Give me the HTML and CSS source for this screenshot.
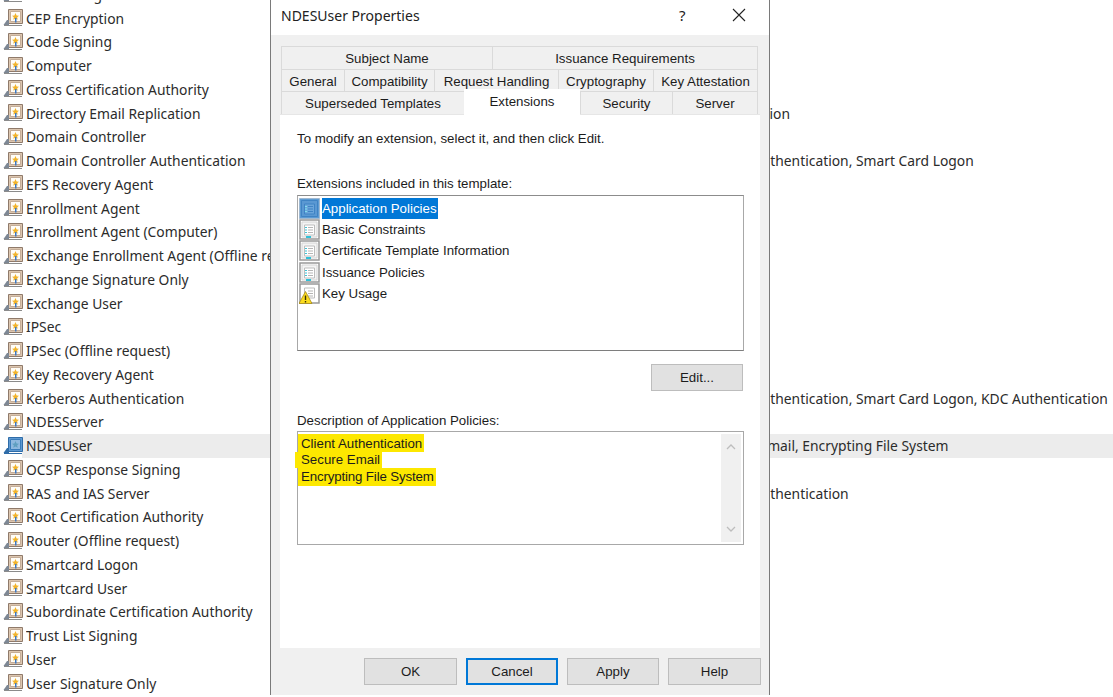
FILE: index.html
```html
<!DOCTYPE html>
<html lang="en">
<head>
<meta charset="utf-8">
<title>NDESUser Properties</title>
<link rel="stylesheet" href="styles.css">
</head>
<body>
<svg class="defs" width="0" height="0" aria-hidden="true">
  <symbol id="tpl" viewBox="0 0 20 20">
    <path d="M5.500 2.500h14v14h-14z" fill="#dcc6b0" stroke="#8f7a6a"/>
    <path d="M7.500 4.500h10v10h-10z" fill="#fffdf8" stroke="#c4ad98"/>
    <path d="M12.500 6l1.100 2.400 2.400.3-1.800 1.600.5 2.400-2.200-1.200-2.200 1.200.5-2.400L9 8.700l2.400-.3z" fill="#f2b42c"/>
    <path d="M12 11h1.500v4.500H12z" fill="#3b78c4"/>
    <path d="M.5 18l3.500-5h2v5z" fill="#7d8794"/>
    <path d="M1 18.500h18" stroke="#8b8b8b"/>
  </symbol>
  <symbol id="tplsel" viewBox="0 0 20 20">
    <path d="M5.500 2.500h14v14h-14z" fill="#5f9ad2" stroke="#2f6ca8"/>
    <path d="M7.500 4.500h10v10h-10z" fill="#8fb9df" stroke="#3a7cba"/>
    <path d="M12.500 6l1.100 2.400 2.400.3-1.800 1.600.5 2.400-2.200-1.200-2.200 1.200.5-2.400L9 8.700l2.400-.3z" fill="#5f9fc0"/>
    <path d="M.5 18l3.500-5h2v5z" fill="#2f6ca8"/>
    <path d="M1 18.500h18" stroke="#2f6ca8"/>
  </symbol>
  <symbol id="ext" viewBox="0 0 21 21">
    <path d="M1 1h19v19H1z" fill="#fff" stroke="#999" stroke-width="1.500"/>
    <path d="M3 3h15v15H3z" fill="#f4f4f4" stroke="#d4d4d4"/>
    <path d="M5.500 6h10v10h-10z" fill="#fff" stroke="#bdbdbd"/>
    <path d="M6 8.500h2M6 11h2M6 13.500h2" stroke="#3fc3d6"/>
    <path d="M9 8.500h5M9 11h5M9 13.500h5" stroke="#b5b5b5"/>
    <path d="M7 18h5" stroke="#2fc0d8" stroke-width="2"/>
  </symbol>
  <symbol id="extsel" viewBox="0 0 21 21">
    <path d="M.5.500h20v20H.5z" fill="#5c9bd3" stroke="#9fb9d2"/>
    <path d="M2.500 2.500h16v16h-16z" fill="#5a98d2" stroke="#3f83c4"/>
    <path d="M5.500 6h10v10h-10z" fill="#6ba5da" stroke="#3f83c4"/>
    <path d="M6 8.500h2M6 11h2M6 13.500h2" stroke="#7fe0ee"/>
    <path d="M9 8.500h5M9 11h5M9 13.500h5" stroke="#3f83c4"/>
  </symbol>
  <symbol id="warn" viewBox="0 0 21 21">
    <path d="M1 1h19v19H1z" fill="#fff" stroke="#999" stroke-width="1.500"/>
    <path d="M5.500 5h10v10h-10z" fill="#fff" stroke="#bdbdbd"/>
    <path d="M9 8h5M9 10.500h5M9 13h5" stroke="#b5b5b5"/>
    <path d="M6.500 8.500L13 20.500H0z" fill="#fbdc1e" stroke="#a68a1c" stroke-width=".8"/>
    <path d="M5.800 12.500h1.400v4.500H5.800zM5.800 18h1.400v1.400H5.800z" fill="#3a3000"/>
  </symbol>
</svg>

<main class="canvas">
  <ul class="templates">
    <li class="row"><svg class="tpl-icon"><use href="#tpl"/></svg><span class="name">CA Exchange</span></li>
    <li class="row"><svg class="tpl-icon"><use href="#tpl"/></svg><span class="name">CEP Encryption</span></li>
    <li class="row"><svg class="tpl-icon"><use href="#tpl"/></svg><span class="name">Code Signing</span></li>
    <li class="row"><svg class="tpl-icon"><use href="#tpl"/></svg><span class="name">Computer</span></li>
    <li class="row"><svg class="tpl-icon"><use href="#tpl"/></svg><span class="name">Cross Certification Authority</span></li>
    <li class="row"><svg class="tpl-icon"><use href="#tpl"/></svg><span class="name">Directory Email Replication</span><span class="purpose shifted">Replication</span></li>
    <li class="row"><svg class="tpl-icon"><use href="#tpl"/></svg><span class="name">Domain Controller</span></li>
    <li class="row"><svg class="tpl-icon"><use href="#tpl"/></svg><span class="name">Domain Controller Authentication</span><span class="purpose">Client Authentication, Smart Card Logon</span></li>
    <li class="row"><svg class="tpl-icon"><use href="#tpl"/></svg><span class="name">EFS Recovery Agent</span></li>
    <li class="row"><svg class="tpl-icon"><use href="#tpl"/></svg><span class="name">Enrollment Agent</span></li>
    <li class="row"><svg class="tpl-icon"><use href="#tpl"/></svg><span class="name">Enrollment Agent (Computer)</span></li>
    <li class="row"><svg class="tpl-icon"><use href="#tpl"/></svg><span class="name">Exchange Enrollment Agent (Offline request)</span></li>
    <li class="row"><svg class="tpl-icon"><use href="#tpl"/></svg><span class="name">Exchange Signature Only</span></li>
    <li class="row"><svg class="tpl-icon"><use href="#tpl"/></svg><span class="name">Exchange User</span></li>
    <li class="row"><svg class="tpl-icon"><use href="#tpl"/></svg><span class="name">IPSec</span></li>
    <li class="row"><svg class="tpl-icon"><use href="#tpl"/></svg><span class="name">IPSec (Offline request)</span></li>
    <li class="row"><svg class="tpl-icon"><use href="#tpl"/></svg><span class="name">Key Recovery Agent</span></li>
    <li class="row"><svg class="tpl-icon"><use href="#tpl"/></svg><span class="name">Kerberos Authentication</span><span class="purpose">Client Authentication, Smart Card Logon, KDC Authentication</span></li>
    <li class="row"><svg class="tpl-icon"><use href="#tpl"/></svg><span class="name">NDESServer</span></li>
    <li class="row selected"><svg class="tpl-icon"><use href="#tplsel"/></svg><span class="name">NDESUser</span><span class="purpose">Secure Email, Encrypting File System</span></li>
    <li class="row"><svg class="tpl-icon"><use href="#tpl"/></svg><span class="name">OCSP Response Signing</span></li>
    <li class="row"><svg class="tpl-icon"><use href="#tpl"/></svg><span class="name">RAS and IAS Server</span><span class="purpose">Client Authentication</span></li>
    <li class="row"><svg class="tpl-icon"><use href="#tpl"/></svg><span class="name">Root Certification Authority</span></li>
    <li class="row"><svg class="tpl-icon"><use href="#tpl"/></svg><span class="name">Router (Offline request)</span></li>
    <li class="row"><svg class="tpl-icon"><use href="#tpl"/></svg><span class="name">Smartcard Logon</span></li>
    <li class="row"><svg class="tpl-icon"><use href="#tpl"/></svg><span class="name">Smartcard User</span></li>
    <li class="row"><svg class="tpl-icon"><use href="#tpl"/></svg><span class="name">Subordinate Certification Authority</span></li>
    <li class="row"><svg class="tpl-icon"><use href="#tpl"/></svg><span class="name">Trust List Signing</span></li>
    <li class="row"><svg class="tpl-icon"><use href="#tpl"/></svg><span class="name">User</span></li>
    <li class="row"><svg class="tpl-icon"><use href="#tpl"/></svg><span class="name">User Signature Only</span></li>
  </ul>

  <section class="dialog">
    <header class="titlebar">
      <h1 class="title">NDESUser Properties</h1>
      <span class="help-q">?</span>
      <svg class="close" width="14" height="14" viewBox="0 0 14 14"><path d="M1 1l12 12M13 1L1 13" stroke="#222" stroke-width="1.100" fill="none"/></svg>
    </header>
    <div class="body">
      <div class="tabs">
        <div class="tab-row">
          <span class="tab w-211">Subject Name</span>
          <span class="tab w-266">Issuance Requirements</span>
        </div>
        <div class="tab-row">
          <span class="tab w-63">General</span>
          <span class="tab w-90">Compatibility</span>
          <span class="tab w-124">Request Handling</span>
          <span class="tab w-95">Cryptography</span>
          <span class="tab w-105">Key Attestation</span>
        </div>
        <div class="tab-row">
          <span class="tab w-183">Superseded Templates</span>
          <span class="tab active">Extensions</span>
          <span class="tab w-92">Security</span>
          <span class="tab w-86">Server</span>
        </div>
      </div>
      <div class="panel">
        <p class="hint">To modify an extension, select it, and then click Edit.</p>
        <label class="field-label">Extensions included in this template:</label>
        <ul class="ext-list">
          <li class="ext"><svg class="ext-icon"><use href="#extsel"/></svg><span class="ext-name current">Application Policies</span></li>
          <li class="ext"><svg class="ext-icon"><use href="#ext"/></svg><span class="ext-name">Basic Constraints</span></li>
          <li class="ext"><svg class="ext-icon"><use href="#ext"/></svg><span class="ext-name">Certificate Template Information</span></li>
          <li class="ext"><svg class="ext-icon"><use href="#ext"/></svg><span class="ext-name">Issuance Policies</span></li>
          <li class="ext"><svg class="ext-icon"><use href="#warn"/></svg><span class="ext-name">Key Usage</span></li>
        </ul>
        <div class="edit-line"><button class="btn edit">Edit...</button></div>
        <label class="field-label desc-label">Description of Application Policies:</label>
        <div class="desc-box">
          <div class="desc-lines">
            <div class="mark m1">Client Authentication</div>
            <div class="mark m2">Secure Email</div>
            <div class="mark m3">Encrypting File System</div>
          </div>
          <div class="scroll">
            <svg width="10" height="6" viewBox="0 0 10 6"><path d="M1 5l4-4 4 4" stroke="#bdbdbd" stroke-width="1.300" fill="none"/></svg>
            <svg width="10" height="6" viewBox="0 0 10 6"><path d="M1 1l4 4 4-4" stroke="#bdbdbd" stroke-width="1.300" fill="none"/></svg>
          </div>
        </div>
      </div>
      <footer class="actions">
        <button class="btn wide">OK</button>
        <button class="btn default">Cancel</button>
        <button class="btn">Apply</button>
        <button class="btn wide">Help</button>
      </footer>
    </div>
  </section>
</main>
</body>
</html>
```

FILE: styles.css
```css
* { box-sizing: border-box; }
html, body { margin: 0; height: 100%; overflow: hidden; background: #fff; }
.defs { position: absolute; }
.canvas { position: relative; width: 1113px; height: 697px; overflow: hidden; }

.templates {
  list-style: none;
  margin: -17.500px 0 0;
  padding: 0;
  font-family: "Noto Sans", "Open Sans", sans-serif;
  font-size: 13.850px;
  color: #2b2b2b;
}
.row {
  display: flex;
  align-items: center;
  height: 23.760px;
  white-space: nowrap;
  padding-left: 3px;
}
.row.selected { background: #ececec; margin-left: 22px; padding-left: 0; }
.row.selected .tpl-icon { margin-left: -19px; }
.tpl-icon { width: 20px; height: 20px; flex: none; margin-right: 3px; position: relative; top: -1px; }
.name { width: 686px; flex: none; overflow: hidden; }
.purpose { flex: none; }
.purpose.shifted { margin-left: 6px; }

.dialog {
  position: absolute;
  left: 270px;
  top: 0;
  width: 500px;
  height: 695px;
  border: solid #7a7a7a;
  border-width: 0 1px;
  display: flex;
  flex-direction: column;
  font-family: "Liberation Sans", Arial, sans-serif;
  font-size: 13.300px;
  color: #1c1c1c;
  background: #f0f0f0;
}
.titlebar {
  height: 35px;
  flex: none;
  background: #fff;
  display: flex;
  align-items: center;
  padding-left: 10px;
}
.title { margin: 0; font: 400 14px "Noto Sans", sans-serif; color: #222; flex: 1; position: relative; top: -2px; }
.help-q { font: 400 15px "Noto Sans", sans-serif; width: 53px; position: relative; top: -3px; }
.close { margin-right: 23px; position: relative; top: -3px; }

.body { flex: 1; display: flex; flex-direction: column; padding: 11px 0 0 9px; min-height: 0; }
.tabs { margin-left: 1px; width: 478px; display: flex; flex-direction: column; }
.tab-row { display: flex; height: 22.500px; align-items: stretch; }
.tab {
  display: flex;
  align-items: center;
  justify-content: center;
  background: #f0f0f0;
  border: 1px solid #dadada;
  border-bottom: 0;
  margin-right: -1px;
  padding-top: 2px;
}
.w-211 { width: 212px; } .w-266 { width: 266px; }
.w-63 { width: 64px; } .w-90 { width: 91px; } .w-124 { width: 125px; } .w-95 { width: 96px; } .w-105 { width: 105px; }
.w-183 { width: 184px; } .w-92 { width: 93px; } .w-86 { width: 86px; }
.tab.active {
  width: 116px;
  background: #fff;
  border: 0;
  margin: -2px 0 -1px 0;
  padding: 0 0 1px;
  position: relative;
  z-index: 1;
}
.panel {
  width: 480px;
  height: 534px;
  flex: none;
  background: #fff;
  padding: 14px 15px 0 17px;
  border: 1px solid #e6e6e6;
  border-width: 1px 0 0;
}
.hint { margin: 0; line-height: 19px; }
.field-label { display: block; line-height: 17px; margin-top: 27px; }
.ext-list {
  list-style: none;
  margin: 3px 0 0;
  padding: 2px 1px;
  width: 447px;
  height: 156px;
  border: 1px solid #a8a8a8;
  border-top-color: #8c8c8c;
  border-bottom-color: #7e7e7e;
}
.ext { display: flex; align-items: center; height: 21.300px; }
.ext-icon { width: 21px; height: 21px; flex: none; margin-right: 2px; }
.ext-name { padding: 0 1px 0 0; line-height: 21px; white-space: nowrap; }
.ext-name.current { background: #0078d7; color: #fff; }
.edit-line { display: flex; justify-content: flex-end; width: 446px; margin-top: 13px; }
.btn {
  width: 92px;
  height: 27px;
  border: 1px solid #bdbdbd;
  background: #e1e1e1;
  font: inherit;
  color: #1c1c1c;
  padding: 0;
}
.btn.wide { width: 93px; }
.btn.default { border: 2px solid #0078d7; }
.desc-label { margin-top: 21px; }
.desc-box {
  position: relative;
  display: flex;
  justify-content: space-between;
  margin-top: 2px;
  width: 447px;
  height: 114px;
  border: 1px solid #a8a8a8;
  padding: 2px 2px 2px 0;
}
.desc-lines { flex: 1; }
.mark {
  background: #fde800;
  width: max-content;
  padding: 0 2px 0 3px;
  line-height: 17px;
  height: 17px;
}
.m1 { height: 18px; line-height: 19px; }
.m2 { margin-left: -3px; padding-left: 6px; height: 16px; line-height: 15px; }
.m3 { height: 18px; letter-spacing: -0.150px; }
.scroll {
  width: 20px;
  background: #f0f0f0;
  display: flex;
  flex-direction: column;
  align-items: center;
  justify-content: space-between;
  padding: 10px 0;
}
.actions { display: flex; gap: 9px; margin-top: 10px; padding-left: 84px; }
```
